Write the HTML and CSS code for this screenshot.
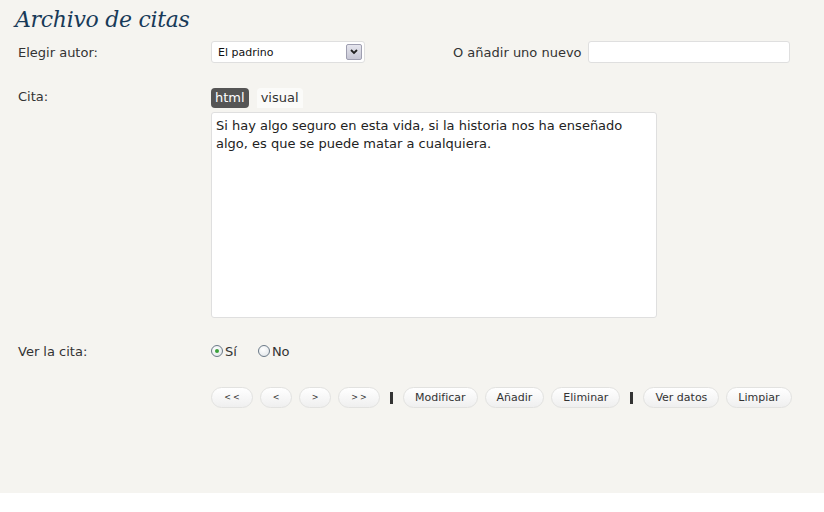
FILE: index.html
```html
<!DOCTYPE html>
<html lang="es">
<head>
<meta charset="utf-8">
<title>Archivo de citas</title>
<link rel="stylesheet" href="styles.css">
</head>
<body>
<div class="wrap">
  <h2 class="title">Archivo de citas</h2>

  <div class="row r1">
    <label class="lbl">Elegir autor:</label>
    <div class="field">
      <div class="select">
        <span class="sel-text">El padrino</span>
        <span class="sel-arrow">
          <svg width="8" height="6" viewBox="0 0 8 6"><path d="M1 1 L4 4 L7 1" fill="none" stroke="#222" stroke-width="1.8"/></svg>
        </span>
      </div>
      <span class="new-label">O añadir uno nuevo</span>
      <input class="new" type="text">
    </div>
  </div>

  <div class="row r2">
    <label class="lbl lbl-top">Cita:</label>
    <div class="editor">
      <div class="tabs">
        <span class="tab active">html</span>
        <span class="tab">visual</span>
      </div>
      <textarea class="quote">Si hay algo seguro en esta vida, si la historia nos ha enseñado algo, es que se puede matar a cualquiera.</textarea>
    </div>
  </div>

  <div class="row r3">
    <label class="lbl">Ver la cita:</label>
    <div class="radios">
      <label class="radio"><span class="dot checked"></span>Sí</label>
      <label class="radio"><span class="dot"></span>No</label>
    </div>
  </div>

  <div class="row r4">
    <div class="lbl"></div>
    <div class="buttons">
      <button class="btn nav nav2">&lt;&lt;</button>
      <button class="btn nav">&lt;</button>
      <button class="btn nav">&gt;</button>
      <button class="btn nav nav2">&gt;&gt;</button>
      <span class="sep"></span>
      <button class="btn">Modificar</button>
      <button class="btn">Añadir</button>
      <button class="btn">Eliminar</button>
      <span class="sep"></span>
      <button class="btn">Ver datos</button>
      <button class="btn">Limpiar</button>
    </div>
  </div>
</div>
</body>
</html>
```

FILE: styles.css
```css
html, body {
  margin: 0;
  padding: 0;
  background: #ffffff;
}
body {
  font-family: "DejaVu Sans", Verdana, sans-serif;
  color: #333;
}
.wrap {
  background: #f5f4f0;
  height: 493px;
  box-sizing: border-box;
  padding-top: 5px;
}
.title {
  margin: 0;
  padding-left: 15px;
  font-family: "DejaVu Serif", Georgia, serif;
  font-style: italic;
  font-weight: normal;
  font-size: 22px;
  line-height: 30px;
  color: #183a58;
  letter-spacing: -0.3px;
}
.row {
  display: flex;
  align-items: center;
}
.lbl {
  width: 193px;
  padding-left: 18px;
  flex: none;
  font-size: 13px;
  color: #333;
}
.r1 {
  margin-top: 6px;
  height: 22px;
}
.field {
  display: flex;
  align-items: center;
}
.select {
  position: relative;
  width: 154px;
  height: 22px;
  box-sizing: border-box;
  border: 1px solid #dfdfdf;
  border-radius: 3px;
  background: #fff;
  display: flex;
  align-items: center;
  padding-left: 6px;
}
.sel-text {
  font-size: 11px;
  color: #111;
}
.sel-arrow {
  position: absolute;
  right: 2px;
  top: 2px;
  width: 16px;
  height: 16px;
  box-sizing: border-box;
  border: 1px solid #9e9eb0;
  border-radius: 2px;
  background: linear-gradient(#e6e6ee, #c6c6d4);
  display: flex;
  align-items: center;
  justify-content: center;
}
.new-label {
  margin-left: 88px;
  font-size: 13px;
  color: #333;
}
.new {
  margin: 0 0 0 6px;
  width: 202px;
  height: 22px;
  box-sizing: border-box;
  border: 1px solid #dfdfdf;
  border-radius: 3px;
  background: #fff;
}
.r2 {
  margin-top: 25px;
  align-items: flex-start;
}
.lbl-top {
  line-height: 18px;
}
.editor {
  display: flex;
  flex-direction: column;
}
.tabs {
  display: flex;
  gap: 8px;
  height: 20px;
}
.tab {
  font-size: 13px;
  line-height: 20px;
  padding: 0 4px;
  border-radius: 4px 4px 0 0;
  background: #fbfbf9;
  color: #333;
}
.tab.active {
  background: #555;
  color: #fff;
  border-radius: 4px;
}
.quote {
  margin-top: 4px;
  width: 446px;
  height: 206px;
  box-sizing: border-box;
  border: 1px solid #dfdfdf;
  border-radius: 3px;
  background: #fff;
  padding: 4px 4px;
  font-family: "DejaVu Sans", Verdana, sans-serif;
  font-size: 13px;
  line-height: 18px;
  color: #222;
  resize: none;
}
.r3 {
  margin-top: 23px;
  height: 20px;
}
.radios {
  display: flex;
  gap: 21px;
}
.radio {
  display: flex;
  align-items: center;
  gap: 2px;
  font-size: 13px;
  color: #333;
}
.dot {
  width: 12px;
  height: 12px;
  box-sizing: border-box;
  border: 1px solid #6b7a88;
  border-radius: 50%;
  background: radial-gradient(circle at 40% 35%, #fff, #dde2e6);
  display: flex;
  align-items: center;
  justify-content: center;
}
.dot.checked::after {
  content: "";
  width: 4px;
  height: 4px;
  border-radius: 50%;
  background: #3aa03a;
}
.r4 {
  margin-top: 26px;
}
.buttons {
  display: flex;
  align-items: center;
  gap: 7px;
}
.btn {
  height: 21px;
  box-sizing: border-box;
  margin: 0;
  padding: 0 11px;
  border: 1px solid #e2e2e0;
  border-radius: 11px;
  background: linear-gradient(#ffffff, #efefef);
  font-family: "DejaVu Sans", Verdana, sans-serif;
  font-size: 11px;
  color: #333;
  line-height: 19px;
}
.nav {
  width: 32px;
  padding: 0;
  font-size: 8px;
}
.nav2 {
  width: 42px;
  letter-spacing: 2px;
  text-indent: 2px;
}
.sep {
  width: 3px;
  height: 12px;
  background: #333;
  margin: 0 3px;
}
```
